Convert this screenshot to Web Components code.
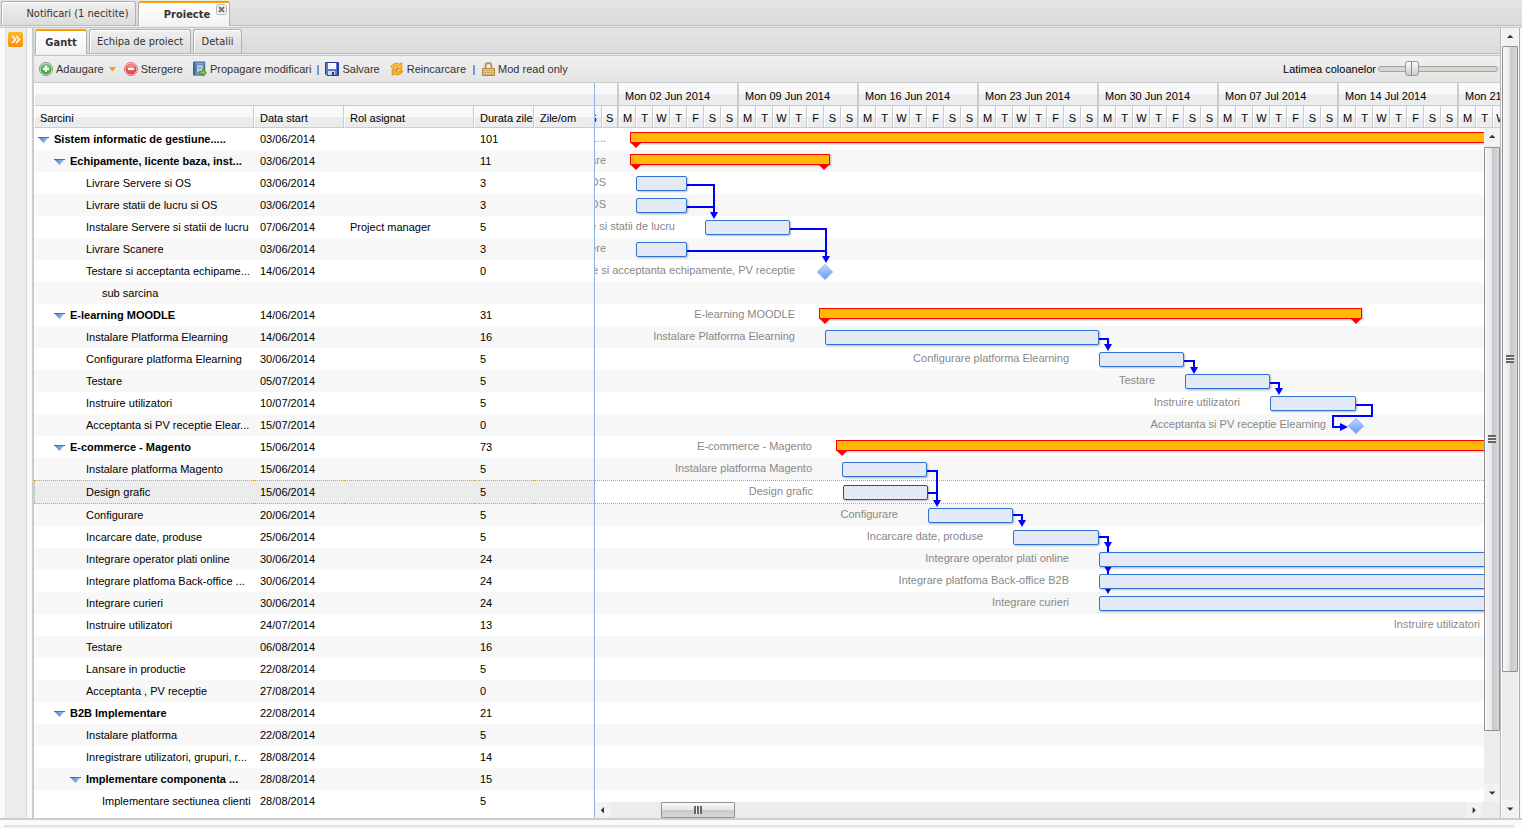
<!DOCTYPE html>
<html lang="ro">
<head>
<meta charset="utf-8">
<title>Proiecte</title>
<style>
html, body { height: 100%; margin: 0; }
body { font: 11px/14px "Liberation Sans", Arial, sans-serif; color: #000; background: #fafafa; overflow: hidden; }
</style>
</head>
<body>
<project-app></project-app>
<script>
const define = (name, html, setup) => customElements.define(name, class extends HTMLElement {
  connectedCallback() {
    if (this.shadowRoot) return;
    const root = this.attachShadow({ mode: "open" });
    root.innerHTML = "<style>*,::before,::after,:host,:host::after{box-sizing:border-box}" + (typeof html === "function" ? html(this) : html);
    if (setup) setup(this, root);
  }
});

const ICONS = {
  add: `<svg width="14" height="14" viewBox="0 0 14 14"><defs><radialGradient id="g" cy=".3"><stop offset="0" stop-color="#a5dba0"/><stop offset="1" stop-color="#4fa54d"/></radialGradient></defs><circle cx="7" cy="7" r="6.5" fill="#e6f3e5" stroke="#6ba56a"/><circle cx="7" cy="7" r="5.5" fill="url(#g)"/><path d="M7 4v6M4 7h6" stroke="#fff" stroke-width="2"/></svg>`,
  remove: `<svg width="14" height="14" viewBox="0 0 14 14"><defs><radialGradient id="g" cy=".3"><stop offset="0" stop-color="#f9a79c"/><stop offset="1" stop-color="#e05048"/></radialGradient></defs><circle cx="7" cy="7" r="6.5" fill="#fbe4e2" stroke="#d2706a"/><circle cx="7" cy="7" r="5.5" fill="url(#g)"/><path d="M4 7h6" stroke="#fff" stroke-width="2"/></svg>`,
  spread: `<svg width="14" height="16" viewBox="0 0 15 16"><path d="M.5.500h12v14H.5z" fill="#7fa8d3" stroke="#2d5a8c"/><path d="M1 1h2v13H1z" fill="#3f6fa5"/><path d="M4 3.500h7v8H4z" fill="#dbe8f5" stroke="#4f7bab"/><path d="M5 6h5M5 8h4" stroke="#5581af"/><path d="M6.500 10.500h3.500V8l4.500 4-4.500 3.500V13H6.500z" fill="#86c945" stroke="#4b8f28"/></svg>`,
  save: `<svg width="14" height="14" viewBox="0 0 14 14"><path d="M.5.5h13v13H2L.5 12z" fill="#5f74cc" stroke="#2a3c92"/><path d="M3 1h8v6H3z" fill="#f5f8ff"/><path d="M12 1h1v12h-1z" fill="#2c3f9d"/><path d="M3 9h7v4H3z" fill="#d2d7e6"/><path d="M7 10h2v3H7z" fill="#26306c"/></svg>`,
  reload: `<svg width="14" height="14" viewBox="0 0 14 14"><path d="M1 5C2.500 1 7.500.5 9.800 2.300L11.800.5v6.300H5.800L7.700 4.600C6 3.600 4 4 3.800 6.200z" fill="#ffbf45" stroke="#db8a05" stroke-width=".9"/><path d="M13 9c-1.500 4-6.500 4.500-8.800 2.700L2.200 13.500V7.200h6L6.300 9.400c1.700 1 3.700.6 3.900-1.600z" fill="#ffad22" stroke="#db8a05" stroke-width=".9"/></svg>`,
  lock: `<svg width="13" height="14" viewBox="0 0 13 14"><path d="M3.500 7V4C3.500 2 5 1 6.500 1s3 1 3 3v3" fill="none" stroke="#b79a62" stroke-width="2"/><path d="M.5 6.500h12v7H.5z" fill="#ecc983" stroke="#b08a45"/><path d="M1 8.500h11M1 10.500h11M1 12.500h11" stroke="#c49f5a" stroke-width=".8"/></svg>`
};

/* name, start date, duration, tree level; bar holds the start and end on the time axis */
const T = (name, date, days, level, extra = {}) => ({ name, date, days, level, ...extra });
const TASKS = [
  T("Sistem informatic de gestiune.....", "03/06/2014", 101, 0, { group: 1, bar: [41, 2000] }),
  T("Echipamente, licente baza, inst...", "03/06/2014", 11, 1, { group: 1, full: "Echipamente, licente baza, instalare", bar: [41, 229] }),
  T("Livrare Servere si OS", "03/06/2014", 3, 2, { bar: [41, 92] }),
  T("Livrare statii de lucru si OS", "03/06/2014", 3, 2, { bar: [41, 92] }),
  T("Instalare Servere si statii de lucru", "07/06/2014", 5, 2, { role: "Project manager", bar: [110, 195] }),
  T("Livrare Scanere", "03/06/2014", 3, 2, { bar: [41, 92] }),
  T("Testare si acceptanta echipame...", "14/06/2014", 0, 2, { full: "Testare si acceptanta echipamente, PV receptie", bar: [230, 230] }),
  T("sub sarcina", "", "", 3),
  T("E-learning MOODLE", "14/06/2014", 31, 1, { group: 1, bar: [230, 761] }),
  T("Instalare Platforma Elearning", "14/06/2014", 16, 2, { bar: [230, 504] }),
  T("Configurare platforma Elearning", "30/06/2014", 5, 2, { bar: [504, 589] }),
  T("Testare", "05/07/2014", 5, 2, { bar: [590, 675] }),
  T("Instruire utilizatori", "10/07/2014", 5, 2, { bar: [675, 761] }),
  T("Acceptanta si PV receptie Elear...", "15/07/2014", 0, 2, { full: "Acceptanta si PV receptie Elearning", bar: [761, 761] }),
  T("E-commerce - Magento", "15/06/2014", 73, 1, { group: 1, bar: [247, 1800] }),
  T("Instalare platforma Magento", "15/06/2014", 5, 2, { bar: [247, 332] }),
  T("Design grafic", "15/06/2014", 5, 2, { selected: 1, bar: [248, 333] }),
  T("Configurare", "20/06/2014", 5, 2, { bar: [333, 418] }),
  T("Incarcare date, produse", "25/06/2014", 5, 2, { bar: [418, 504] }),
  T("Integrare operator plati online", "30/06/2014", 24, 2, { bar: [504, 915] }),
  T("Integrare platfoma Back-office ...", "30/06/2014", 24, 2, { full: "Integrare platfoma Back-office B2B", bar: [504, 915] }),
  T("Integrare curieri", "30/06/2014", 24, 2, { bar: [504, 915] }),
  T("Instruire utilizatori", "24/07/2014", 13, 2, { bar: [915, 1138] }),
  T("Testare", "06/08/2014", 16, 2),
  T("Lansare in productie", "22/08/2014", 5, 2),
  T("Acceptanta , PV receptie", "27/08/2014", 0, 2),
  T("B2B Implementare", "22/08/2014", 21, 1, { group: 1 }),
  T("Instalare platforma", "22/08/2014", 5, 2),
  T("Inregistrare utilizatori, grupuri, r...", "28/08/2014", 14, 2),
  T("Implementare componenta ...", "28/08/2014", 15, 2, { group: 1 }),
  T("Implementare sectiunea clienti", "28/08/2014", 5, 3)
];

define("tab-item", `
:host{display:block;height:24px}
button{position:relative;display:block;height:100%;width:100%;font:11px/14px "DejaVu Sans Condensed","DejaVu Sans",sans-serif;color:#333;padding:0 6px;border:1px solid #b0b0b0;border-bottom:0;border-radius:3px 3px 0 0;background:linear-gradient(#f0f0f0,#dcdcdc);box-shadow:inset 1px 1px #fff;white-space:nowrap;text-align:center}
:host([active]){height:25px}
:host([active]) button{font-weight:bold;border-top:2px solid #ff9c00;background:linear-gradient(#fff,#f2f2f2)}
:host([wide]) button{padding-left:24px}
:host([closable]) button{padding-left:12px}
svg{position:absolute;right:2px;top:1px}
</style><button type="button" role="tab"><slot></slot></button>`, (el, root) => {
  if (el.hasAttribute("closable")) root.querySelector("button").insertAdjacentHTML("beforeend", `<svg width="11" height="11" viewBox="0 0 11 11"><rect x=".5" y=".5" width="10" height="10" rx="2" fill="#f4f4f4" stroke="#b5b5b5"/><path d="M3 3l5 5M8 3l-5 5" stroke="#777" stroke-width="2"/></svg>`);
});

define("tab-strip", `
:host{display:block;flex:none;background:linear-gradient(#e4e4e4,#d9d9d9)}
div{display:flex;align-items:flex-start;gap:2px;height:25px;padding:1px 1px 0}
:host::after{content:"";display:block;height:3px;background:#ececec;border-top:1px solid #bcbcbc;border-bottom:1px solid #c4c4c4}
</style><div role="tablist"><slot></slot></div>`);

define("tool-button", el => `
:host{display:block}
button{display:flex;align-items:center;gap:3px;height:20px;padding:0;border:0;background:none;font:11px/14px "Liberation Sans",Arial,sans-serif;color:#333;white-space:nowrap}
.arrow{width:7px;border:solid transparent;border-width:4px 3px 0;border-top-color:#f29a1c;margin-left:2px}
</style><button type="button">${ICONS[el.getAttribute("icon")]}<slot></slot>${el.hasAttribute("menu") ? '<span class="arrow"></span>' : ""}</button>`);

define("tool-bar", `
:host{display:flex;flex:none;align-items:center;height:27px;padding:0 2px 0 5px;border-bottom:1px solid #ccc;background:linear-gradient(#f0f0f0,#e4e4e4)}
.sep{width:2px;height:10px;background:#6aa3d8;margin:2px 7px 0}
.sep.a{margin:2px 6px 0}
.g10{margin-left:10px}.first{margin-right:8px}
.grow{flex:1}
label{color:#000;margin-right:2px;white-space:nowrap}
input{appearance:none;width:120px;height:16px;margin:0;background:none}
input::-webkit-slider-runnable-track{height:6px;border:1px solid #a9a29b;border-radius:3px;background:#d9d5d1}
input::-webkit-slider-thumb{appearance:none;box-sizing:border-box;width:14px;height:15px;margin-top:-6px;border:1px solid #999;border-radius:3px;background:linear-gradient(90deg,transparent 5px,#888 5px,#888 6px,transparent 6px),linear-gradient(#fafafa,#ccc)}
</style>
<tool-button class="first" icon="add" menu>Adaugare</tool-button>
<tool-button icon="remove">Stergere</tool-button>
<tool-button class="g10" icon="spread">Propagare modificari</tool-button>
<span class="sep a"></span>
<tool-button icon="save">Salvare</tool-button>
<tool-button class="g10" icon="reload">Reincarcare</tool-button>
<span class="sep"></span>
<tool-button icon="lock">Mod read only</tool-button>
<span class="grow"></span>
<label for="w">Latimea coloanelor</label><input id="w" type="range" min="0" max="100" value="25">`);

define("task-table", () => `
:host{display:block;width:560px;flex:none;overflow:hidden;background:#fff}
table{width:560px;border-spacing:0;table-layout:fixed}
th{height:22px;padding:2px 0 0 5px;font-weight:normal;text-align:left;border-bottom:1px solid #ccc;border-right:1px solid #ccc;border-left:1px solid #fff;background:linear-gradient(#f9f9f9 50%,#eaecee 50%);white-space:nowrap;overflow:hidden}
th:last-child{border-right:0}
.blank th{height:23px;border-right:0}
td{height:22px;padding:0 0 0 6px;white-space:nowrap;overflow:hidden}
td:first-child{padding-left:calc(4px + var(--level)*16px)}
tr:nth-child(even) td{background:#f7f7f7}
.group td:first-child{font-weight:bold}
i{display:inline-block;width:16px;height:6px}
i svg{display:block}
tbody .sel td{height:24px;background:#ececec;border:dotted #ff9c00;border-width:1px 0}
tbody .sel td:first-child{border-left-width:1px;padding-left:calc(3px + var(--level)*16px)}
</style>
<table><colgroup><col style="width:220px"><col style="width:90px"><col style="width:130px"><col style="width:60px"><col style="width:60px"></colgroup>
<thead><tr class="blank"><th colspan="5"></th></tr><tr><th>Sarcini</th><th>Data start</th><th>Rol asignat</th><th>Durata zile</th><th>Zile/om</th></tr></thead>
<tbody>${TASKS.map(t => `<tr class="${t.group ? "group" : ""} ${t.selected ? "sel" : ""}" style="--level:${t.level}"><td><i>${t.group ? '<svg width="11" height="6" viewBox="0 0 11 6"><defs><linearGradient id="t" x2="1" y2="0"><stop offset="0" stop-color="#3f7fd6"/><stop offset="1" stop-color="#a6cbf7"/></linearGradient></defs><path d="M0 0h11L5.500 6z" fill="url(#t)"/><path d="M0 .5h11" stroke="#3a70c0"/></svg>' : ""}</i>${t.name}</td><td>${t.date}</td><td>${t.role || ""}</td><td>${t.days}</td><td></td></tr>`).join("")}</tbody></table>`);

define("time-header", () => `
:host{display:block;overflow:hidden;height:45px;flex:none;background:#eaecee}
.weeks{display:flex}
.week{flex:none;width:120px}
.week:first-child{width:34px;margin-left:-10px}
.name{height:23px;padding:6px 0 0 6px;border-bottom:1px solid #ccc;border-right:2px solid #ccc;background:linear-gradient(#f9f9f9 50%,#eaecee 50%);white-space:nowrap}
.days{display:flex;height:22px;border-bottom:1px solid #ccc;border-right:1px solid #ccc;background:linear-gradient(#f9f9f9 50%,#eaecee 50%)}
.days span{flex:1;text-align:center;padding-top:5px;border-right:1px solid #ccc;border-left:1px solid #fff}
</style><div class="weeks">${["", "02 Jun", "09 Jun", "16 Jun", "23 Jun", "30 Jun", "07 Jul", "14 Jul", "21 Jul"].map(w => `<div class="week"><div class="name">${w ? `Mon ${w} 2014` : ""}</div><div class="days">${[...(w ? "MTWTFSS" : "SS")].map(d => `<span>${d}</span>`).join("")}</div></div>`).join("")}</div>`);

/* One task on the time axis, with its name to the left of its start */
define("gantt-bar", el => `
:host{position:absolute;top:4px}
.label{position:absolute;right:calc(100% + 30px);top:-1px;color:#888;white-space:nowrap}
.box{height:15px;border:1px solid #2f73d3;border-radius:2px;background:#e4eaf5;box-shadow:1px 1px 2px #0004}
:host([kind=group]) .box{height:11px;margin:0 -6px;border:1px solid #f00;border-radius:0;background:#ffb900}
:host([selected]) .box{border-color:#f00}
.tip{position:absolute;top:11px;border:solid transparent;border-width:5px 5px 0;border-top-color:#f00}
.tip.l{left:-5px}.tip.r{right:-5px}
svg{position:absolute;left:-8px;top:0}
</style><span class="label"><slot></slot></span>${el.getAttribute("kind") === "milestone"
  ? `<svg width="17" height="17" viewBox="0 0 17 17"><defs><linearGradient id="m" x2="0" y2="1"><stop offset="0" stop-color="#c6dcff"/><stop offset=".5" stop-color="#8fb8fb"/><stop offset="1" stop-color="#6c9df3"/></linearGradient></defs><path d="M8 .5l7.500 7.500L8 15.500.5 8z" fill="url(#m)" stroke="#7fa9ee"/></svg>`
  : `<div class="box"></div>${el.getAttribute("kind") === "group" ? '<span class="tip l"></span><span class="tip r"></span>' : ""}`}`);

define("gantt-chart", () => {
  const down = (x, y) => `<path class="h" d="M${x - 4} ${y - 7}h8l-4 7z"/>`;
  const line = d => `<path d="${d}"/>`;
  const links = line("M92 57h27v28") + line("M92 79h27") + down(119, 91)
    + line("M195 101h36v30") + line("M92 123h139") + down(231, 135)
    + line("M504 211h9v8") + down(513, 223) + line("M589 233h10v8") + down(599, 246)
    + line("M675 255h9v8") + down(684, 267)
    + line("M761 277h16v11h-39v11h8") + '<path class="h" d="M745 295v8l8-4z"/>'
    + line("M332 343h10v30") + line("M333 365h9") + down(342, 379)
    + line("M418 387h9v8") + down(427, 399)
    + line("M504 409h9v50") + down(513, 421) + down(513, 445) + down(513, 466);
  return `
:host{display:block;position:relative;flex:1;min-width:0;overflow:hidden;background:#fff}
.row{position:relative;height:22px}
.row:nth-child(even){background:#f7f7f7}
.row.sel{height:24px;background:#fff;border:dotted #ff9c00;border-width:1px 0}
.links{position:absolute;left:0;top:0;width:100%;height:100%;z-index:1}
.links path{fill:none;stroke:#00f;stroke-width:2}
.links .h{fill:#00f;stroke:none}
gantt-bar{z-index:2}
</style><div>${TASKS.map(t => {
    if (!t.bar) return '<div class="row"></div>';
    const [a, b] = t.bar, kind = t.group ? "group" : a === b ? "milestone" : "task";
    return `<div class="row${t.selected ? " sel" : ""}"><gantt-bar kind="${kind}"${t.selected ? " selected" : ""} style="left:${a}px;width:${b - a}px">${t.full || t.name}</gantt-bar></div>`;
  }).join("")}</div><svg class="links">${links}</svg>`;
});

const ARROWS = { up: "M0 5l4-4 4 4z", down: "M0 2l4 4 4-4z", left: "M5 0L1 4l4 4z", right: "M2 0l4 4-4 4z" };
const arrow = k => `<svg width="8" height="8" viewBox="0 0 8 8"><path transform="translate(1 1) scale(.8)" d="${ARROWS[k]}" fill="#333"/></svg>`;
define("scroll-bar", el => {
  const h = el.hasAttribute("horizontal");
  return `
:host{display:flex;flex:none;width:16px;flex-direction:column;background:#ececec;--dir:90deg}
:host([horizontal]){width:auto;height:16px;flex-direction:row;--dir:180deg}
.end{flex:none;width:16px;height:18px;display:flex;align-items:center;justify-content:center;background:#f2f2f2}
:host([horizontal]) .end{height:16px}
.track{flex:1;display:flex;flex-direction:${h ? "row" : "column"};min-height:0;min-width:0}
.before{flex:${el.getAttribute("before")}}.after{flex:${el.getAttribute("after")}}
.thumb{flex:${el.getAttribute("size")};display:flex;align-items:center;justify-content:center;border:1px solid #919195;border-radius:1px;background:linear-gradient(var(--dir),#f8f8f8,#e6e6e8 50%,#c8c8cc 51%,#d8d8dc)}
.grip{width:8px;height:8px;background:repeating-linear-gradient(${h ? "90deg" : "180deg"},#666 0 2px,#eee 2px 3px)}
</style><span class="end">${arrow(h ? "left" : "up")}</span><div class="track"><span class="before"></span><span class="thumb"><span class="grip"></span></span><span class="after"></span></div><span class="end">${arrow(h ? "right" : "down")}</span>`;
});

define("project-app", `
:host{display:flex;flex-direction:column;height:100vh}
.main{flex:1;display:flex;min-height:0}
.side{flex:none;width:22px;margin:0 5px;border-right:1px solid #d9d9d9;border-left:1px solid #dedede;background:#ececec}
.side button{display:block;margin:4px 0 0 2px;width:15px;height:15px;padding:0;border:0;border-radius:2px;background:linear-gradient(#ffb52a,#f79400)}
.side svg{display:block}
.panel{flex:1;min-width:0;display:flex;flex-direction:column;margin-right:1px;border-left:2px solid #ccc;border-right:1px solid #bbb}
.grid{flex:1;display:flex;min-height:0}
.time{flex:1;min-width:0;display:flex;flex-direction:column;border-left:1px solid #8db4e6;background:#ececec}
.body{flex:1;display:flex;min-height:0}
scroll-bar[horizontal]{margin-right:18px}
.edge{flex:none;width:3px;margin-left:1px;border-left:1px solid #aaa;background:#f6fafd}
.foot{flex:none;height:10px;border-top:2px solid #ccc;background:#fafafa;padding:5px 8px 0 4px}
.foot div{height:3px;border:1px solid #ddd;border-bottom:0;background:#ececec}
.t1{width:135px}.t2{width:92px}.i1{width:52px}.i2{width:102px}.i3{width:49px}
</style>
<tab-strip><tab-item class="t1" wide>Notificari (1 necitite)</tab-item><tab-item class="t2" active closable>Proiecte</tab-item></tab-strip>
<div class="main">
<div class="side"><button type="button" aria-label="Extinde"><svg width="15" height="15" viewBox="0 0 15 15"><path d="M4 4l3.500 3.500L4 11M8 4l3.500 3.500L8 11" fill="none" stroke="#fff" stroke-width="1.600"/></svg></button></div>
<div class="panel">
<tab-strip><tab-item class="i1" active>Gantt</tab-item><tab-item class="i2">Echipa de proiect</tab-item><tab-item class="i3">Detalii</tab-item></tab-strip>
<tool-bar></tool-bar>
<div class="grid"><task-table></task-table>
<div class="time"><time-header></time-header>
<div class="body"><gantt-chart></gantt-chart><scroll-bar before="1" size="583" after="53"></scroll-bar></div>
<scroll-bar horizontal before="50" size="72" after="731"></scroll-bar></div></div>
</div>
<scroll-bar before="0" size="627" after="129"></scroll-bar><div class="edge"></div>
</div>
<div class="foot"><div></div></div>`);
</script>
</body>
</html>
